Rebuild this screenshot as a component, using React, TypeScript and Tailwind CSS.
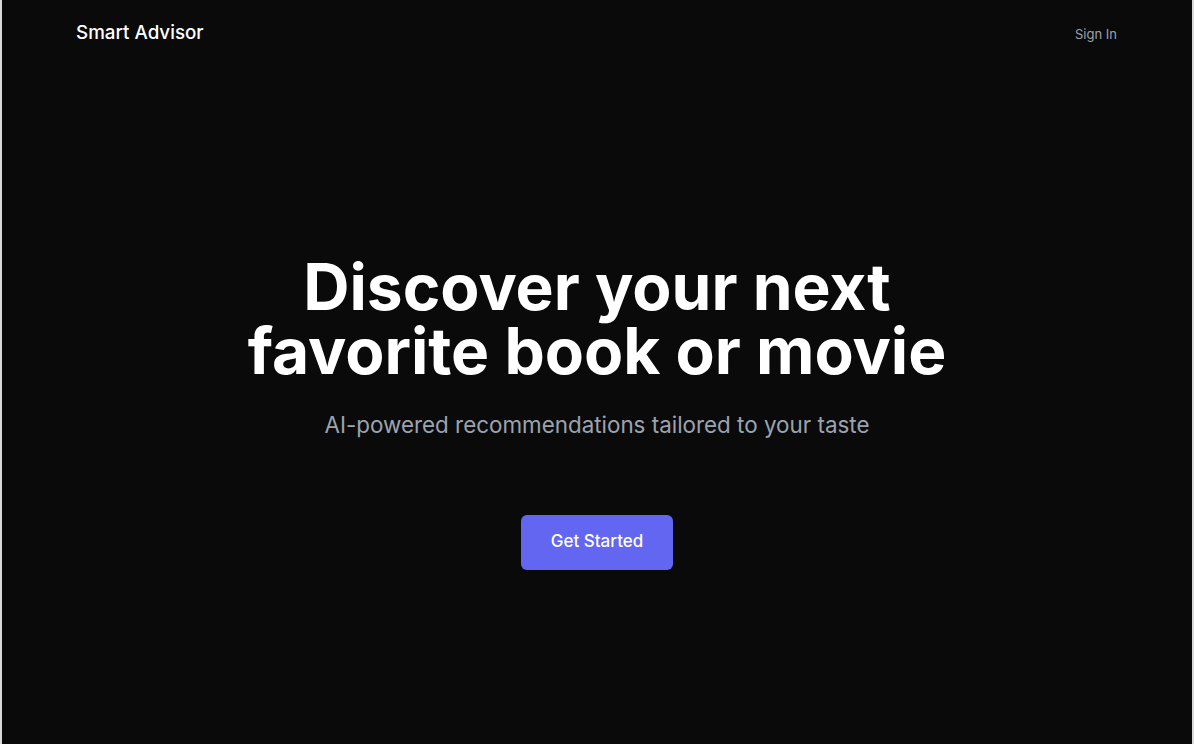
import React from "react";

export default function App() {
  return (
    <div className="h-[744px] w-full bg-[#d9d9d9] px-[2px]" style={{ fontFamily: "Inter, 'Noto Sans', sans-serif" }}>
      <div className="flex h-full flex-col bg-[#0a0a0a]">
        <header className="flex h-[66px] items-center justify-between pl-[74px] pr-[75px]">
          <span className="pt-[1px] text-[18.8px] font-medium text-white">Smart Advisor</span>
          <span className="pt-[3px] text-[13px] text-[#9ca3af]">Sign In</span>
        </header>
        <main className="flex flex-1 flex-col items-center justify-center pt-[14px] text-center">
          <h1 className="text-[64px] font-bold leading-[64px] text-white">
            Discover your next
            <br />
            favorite book or movie
          </h1>
          <p className="mt-[27px] text-[22.4px] leading-[30px] text-[#9ca3af]">
            AI-powered recommendations tailored to your taste
          </p>
          <button className="mt-[75px] h-[55px] w-[152px] rounded-[6px] bg-[#6366f1] text-[17px] font-medium text-white">
            Get Started
          </button>
        </main>
      </div>
    </div>
  );
}
